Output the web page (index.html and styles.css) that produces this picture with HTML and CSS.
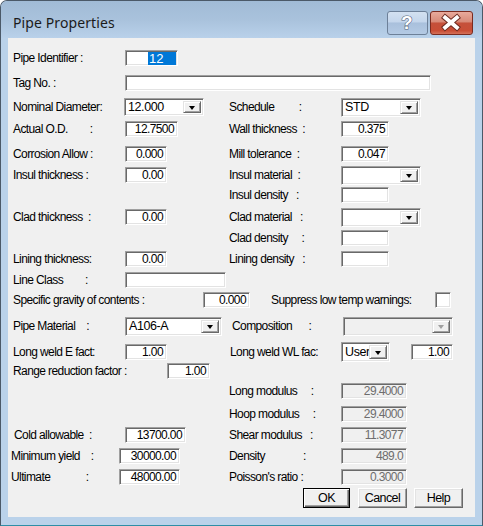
FILE: index.html
```html
<!DOCTYPE html>
<html>
<head>
<meta charset="utf-8">
<link rel="stylesheet" href="styles.css">
</head>
<body>
<div class="window">
  <div class="titlebar">
    <div class="title">Pipe Properties</div>
    <div class="caption">
      <div class="cap-btn cap-help">
        <svg width="41" height="23" viewBox="0 0 41 23"><text x="20.5" y="18.5" text-anchor="middle" class="qmark">?</text></svg>
      </div>
      <div class="cap-btn cap-close">
        <svg width="43" height="23" viewBox="0 0 43 23"><path d="M15.5 6.5 L27.5 16.5 M27.5 6.5 L15.5 16.5" class="x-out"/><path d="M15.5 6.5 L27.5 16.5 M27.5 6.5 L15.5 16.5" class="x-in"/></svg>
      </div>
    </div>
  </div>
  <div class="client">
    <div class="row">
      <div class="col-l"><span class="lbl">Pipe Identifier :</span><span class="edit w53 sel-edit"><span class="sel">12</span></span></div>
    </div>
    <div class="row mt9">
      <div class="col-l"><span class="lbl">Tag No. :</span><span class="edit w306"></span></div>
    </div>
    <div class="row mt8">
      <div class="col-l"><span class="lbl">Nominal Diameter:</span><span class="combo w80 cb-l"><span class="cb-text">12.000</span><span class="dd"><i class="arrow"></i></span></span></div>
      <div class="col-r"><span class="lbl">Schedule         :</span><span class="combo w80 tall"><span class="cb-text">STD</span><span class="dd"><i class="arrow"></i></span></span></div>
    </div>
    <div class="row mt6">
      <div class="col-l"><span class="lbl">Actual O.D.        :</span><span class="edit w53">12.7500</span></div>
      <div class="col-r"><span class="lbl">Wall thickness  :</span><span class="edit w48">0.375</span></div>
    </div>
    <div class="row mt9">
      <div class="col-l"><span class="lbl">Corrosion Allow :</span><span class="edit w42">0.000</span></div>
      <div class="col-r"><span class="lbl">Mill tolerance  :</span><span class="edit w48">0.047</span></div>
    </div>
    <div class="row mt5">
      <div class="col-l"><span class="lbl">Insul thickness :</span><span class="edit w42">0.00</span></div>
      <div class="col-r"><span class="lbl">Insul material  :</span><span class="combo w80 tall"><span class="cb-text"></span><span class="dd"><i class="arrow"></i></span></span></div>
    </div>
    <div class="row mt4">
      <div class="col-l"></div>
      <div class="col-r"><span class="lbl">Insul density   :</span><span class="edit w48"></span></div>
    </div>
    <div class="row mt6">
      <div class="col-l"><span class="lbl">Clad thickness  :</span><span class="edit w42">0.00</span></div>
      <div class="col-r"><span class="lbl">Clad material   :</span><span class="combo w80 tall"><span class="cb-text"></span><span class="dd"><i class="arrow"></i></span></span></div>
    </div>
    <div class="row mt5">
      <div class="col-l"></div>
      <div class="col-r"><span class="lbl">Clad density     :</span><span class="edit w48"></span></div>
    </div>
    <div class="row mt5">
      <div class="col-l"><span class="lbl">Lining thickness:</span><span class="edit w42">0.00</span></div>
      <div class="col-r"><span class="lbl">Lining density   :</span><span class="edit w48"></span></div>
    </div>
    <div class="row mt5">
      <div class="col-l"><span class="lbl">Line Class        :</span><span class="edit w101"></span></div>
    </div>
    <div class="row mt4">
      <div class="col-wide"><span class="lbl lbl-sg">Specific gravity of contents :</span><span class="edit w47">0.000</span></div>
      <div class="col-rest"><span class="lbl lbl-sup">Suppress low temp warnings:</span><span class="check"></span></div>
    </div>
    <div class="row mt10">
      <div class="col-l"><span class="lbl">Pipe Material    :</span><span class="combo w97 tall"><span class="cb-text">A106-A</span><span class="dd"><i class="arrow"></i></span></span></div>
      <div class="col-r col-comp"><span class="lbl lbl-comp">Composition      :</span><span class="combo w110 tall disabled"><span class="cb-text"></span><span class="dd"><i class="arrow"></i></span></span></div>
    </div>
    <div class="row mt10">
      <div class="col-l"><span class="lbl">Long weld E fact:</span><span class="edit w42">1.00</span></div>
      <div class="col-r col-wl"><span class="lbl lbl-wl">Long weld WL fac:</span><span class="combo w49 taller"><span class="cb-text">User</span><span class="dd"><i class="arrow"></i></span></span><span class="edit w42 ml21">1.00</span></div>
    </div>
    <div class="row mt3">
      <div class="col-l"><span class="lbl lbl-range">Range reduction factor :</span><span class="edit w43">1.00</span></div>
    </div>
    <div class="row mt4">
      <div class="col-l"></div>
      <div class="col-r"><span class="lbl">Long modulus     :</span><span class="edit w66 ro">29.4000</span></div>
    </div>
    <div class="row mt7">
      <div class="col-l"></div>
      <div class="col-r"><span class="lbl">Hoop modulus     :</span><span class="edit w66 ro">29.4000</span></div>
    </div>
    <div class="row mt5">
      <div class="col-l"><span class="lbl lbl-cold">Cold allowable  :</span><span class="edit w61">13700.00</span></div>
      <div class="col-r"><span class="lbl">Shear modulus   :</span><span class="edit w66 ro">11.3077</span></div>
    </div>
    <div class="row mt5">
      <div class="col-l col-shift"><span class="lbl lbl-min">Minimum yield    :</span><span class="edit w61">30000.00</span></div>
      <div class="col-r"><span class="lbl">Density              :</span><span class="edit w66 ro">489.0</span></div>
    </div>
    <div class="row mt5">
      <div class="col-l col-shift"><span class="lbl lbl-min">Ultimate             :</span><span class="edit w61">48000.00</span></div>
      <div class="col-r"><span class="lbl">Poisson's ratio :</span><span class="edit w66 ro">0.3000</span></div>
    </div>
    <div class="btn-row">
      <span class="btn btn-default">OK</span>
      <span class="btn btn-cancel">Cancel</span>
      <span class="btn btn-help">Help</span>
    </div>
  </div>
</div>
</body>
</html>
```

FILE: styles.css
```css
* { box-sizing: border-box; }
html, body { margin: 0; padding: 0; }
body {
  width: 483px;
  height: 526px;
  overflow: hidden;
  background: #ffffff;
  font-family: "Liberation Sans", Arial, sans-serif;
  font-size: 12px;
  letter-spacing: -0.6px;
  color: #000;
}
.window {
  width: 483px;
  height: 526px;
  border: 1px solid #4b5968;
  border-bottom-color: #2e8ea6;
  border-radius: 7px 7px 0 0;
  background: #bad2ea;
  display: flex;
  flex-direction: column;
  overflow: hidden;
}
.titlebar {
  height: 37px;
  flex: none;
  display: flex;
  align-items: flex-start;
  justify-content: space-between;
  background: linear-gradient(#a1bbd6, #a9c2dc 50%, #b9d1ea);
  padding: 0 9px 0 12px;
}
.title {
  font-family: "Noto Sans", "Open Sans", sans-serif;
  font-size: 14px;
  letter-spacing: 0.1px;
  color: #1b1b1b;
  margin-top: 12px;
}
.caption { display: flex; gap: 2px; margin-top: 10px; }
.cap-btn {
  height: 24px;
  border-radius: 3px;
  display: flex;
}
.cap-help {
  width: 41px;
  border: 1px solid #6d8098;
  background: linear-gradient(#d3e1f1, #c4d6ec 45%, #a9c0dc 50%, #b4cae4);
}
.cap-close {
  width: 43px;
  border: 1px solid #7a2b20;
  background: linear-gradient(#e8aa9c, #d88a78 45%, #c5503a 50%, #c94e36 85%, #d4715a);
}
.cap-btn svg { display: block; margin: -1px 0 0 -1px; }
.qmark {
  font-family: "Liberation Sans", sans-serif;
  font-weight: bold;
  font-size: 19px;
  letter-spacing: 0;
  fill: #ffffff;
  stroke: #55647a;
  stroke-width: 1.2;
  paint-order: stroke;
}
.x-out { stroke: #6b2a20; stroke-width: 6; stroke-linecap: square; fill: none; }
.x-in { stroke: #ffffff; stroke-width: 4; stroke-linecap: square; fill: none; }

.client {
  margin: 0 7px;
  height: 479px;
  flex: none;
  background: #f0f0f0;
  padding: 12px 0 0 5px;
  display: flex;
  flex-direction: column;
}
.row {
  height: 16px;
  display: flex;
  align-items: center;
  flex: none;
}
.mt3 { margin-top: 3px; }
.mt4 { margin-top: 4px; }
.mt5 { margin-top: 5px; }
.mt6 { margin-top: 6px; }
.mt7 { margin-top: 7px; }
.mt8 { margin-top: 8px; }
.mt9 { margin-top: 9px; }
.mt10 { margin-top: 10px; }
.col-l { width: 216px; display: flex; align-items: center; flex: none; }
.col-r { display: flex; align-items: center; }
.col-wide { width: 258px; display: flex; align-items: center; flex: none; }
.col-rest { display: flex; align-items: center; }
.col-shift { margin-left: -2px; width: 218px; }
.col-comp { margin-left: 3px; }
.col-wl { margin-left: 1px; }
.lbl {
  width: 112px;
  flex: none;
  white-space: pre;
  line-height: 14px;
}
.lbl-sg { width: 190px; }
.lbl-sup { width: 164px; }
.lbl-comp { width: 111px; }
.lbl-wl { width: 111px; }
.lbl-range { width: 154px; }
.lbl-cold { padding-left: 1px; }
.lbl-min { width: 108px; }

.edit {
  height: 16px;
  flex: none;
  background: #fff;
  border: 1px solid;
  border-color: #a0a0a0 #fff #fff #a0a0a0;
  box-shadow: inset 1px 1px 0 #696969, inset -1px -1px 0 #e3e3e3;
  text-align: right;
  padding: 0 3px 0 2px;
  line-height: 14px;
  white-space: nowrap;
  overflow: hidden;
}
.edit.ro { background: #f0f0f0; color: #6d6d6d; }
.sel-edit { text-align: left; padding: 0 2px 0 22px; }
.sel {
  display: inline-block;
  width: 28px;
  height: 13px;
  margin-top: 1px;
  line-height: 13px;
  background: #0078d7;
  color: #fff;
  padding-left: 1px;
  font-size: 13px;
  letter-spacing: 0;
}
.w42 { width: 42px; }
.w43 { width: 43px; }
.w47 { width: 47px; }
.w48 { width: 48px; }
.w49 { width: 49px; }
.w53 { width: 53px; }
.w61 { width: 61px; }
.w66 { width: 66px; }
.w80 { width: 80px; }
.w97 { width: 97px; }
.w101 { width: 101px; }
.w110 { width: 110px; }
.w306 { width: 306px; }
.ml21 { margin-left: 21px; }

.combo {
  height: 18px;
  flex: none;
  display: flex;
  align-items: stretch;
  background: #fff;
  border: 1px solid;
  border-color: #a0a0a0 #fff #fff #a0a0a0;
  box-shadow: inset 1px 1px 0 #696969, inset -1px -1px 0 #e3e3e3;
  padding: 2px;
}
.combo.tall { height: 19px; }
.combo.taller { height: 20px; }
.cb-l { margin-left: -1px; }
.cb-text {
  flex: 1;
  display: flex;
  align-items: center;
  padding-left: 1px;
  font-size: 12.5px;
  letter-spacing: -0.4px;
  white-space: nowrap;
  min-width: 0;
}
.dd {
  width: 18px;
  flex: none;
  background: #f0f0f0;
  border: 1px solid;
  border-color: #e3e3e3 #696969 #696969 #e3e3e3;
  box-shadow: inset 1px 1px 0 #fff, inset -1px -1px 0 #a0a0a0;
  display: flex;
  align-items: center;
  justify-content: center;
}
.arrow {
  width: 0;
  height: 0;
  border-left: 3.5px solid transparent;
  border-right: 3.5px solid transparent;
  border-top: 4px solid #000;
  margin-top: 1px;
}
.combo.disabled { background: #f0f0f0; }
.combo.disabled .arrow { border-top-color: #a0a0a0; }

.check {
  width: 16px;
  height: 16px;
  flex: none;
  background: #fff;
  border: 1px solid;
  border-color: #a0a0a0 #fff #fff #a0a0a0;
  box-shadow: inset 1px 1px 0 #696969, inset -1px -1px 0 #e3e3e3;
}

.btn-row {
  display: flex;
  margin-top: 3px;
  padding-left: 290px;
  height: 20px;
}
.btn {
  height: 20px;
  display: flex;
  align-items: center;
  justify-content: center;
  background: #f0f0f0;
  border: 1px solid;
  border-color: #fff #696969 #696969 #fff;
  box-shadow: inset -1px -1px 0 #a0a0a0, inset 1px 1px 0 #e3e3e3;
  font-size: 12.5px;
}
.btn-default {
  width: 47px;
  border: 1px solid #000;
  box-shadow: inset 1px 1px 0 #fff, inset -1px -1px 0 #696969, inset -2px -2px 0 #a0a0a0;
}
.btn-cancel { width: 49px; margin-left: 8px; }
.btn-help { width: 49px; margin-left: 7px; }
```
